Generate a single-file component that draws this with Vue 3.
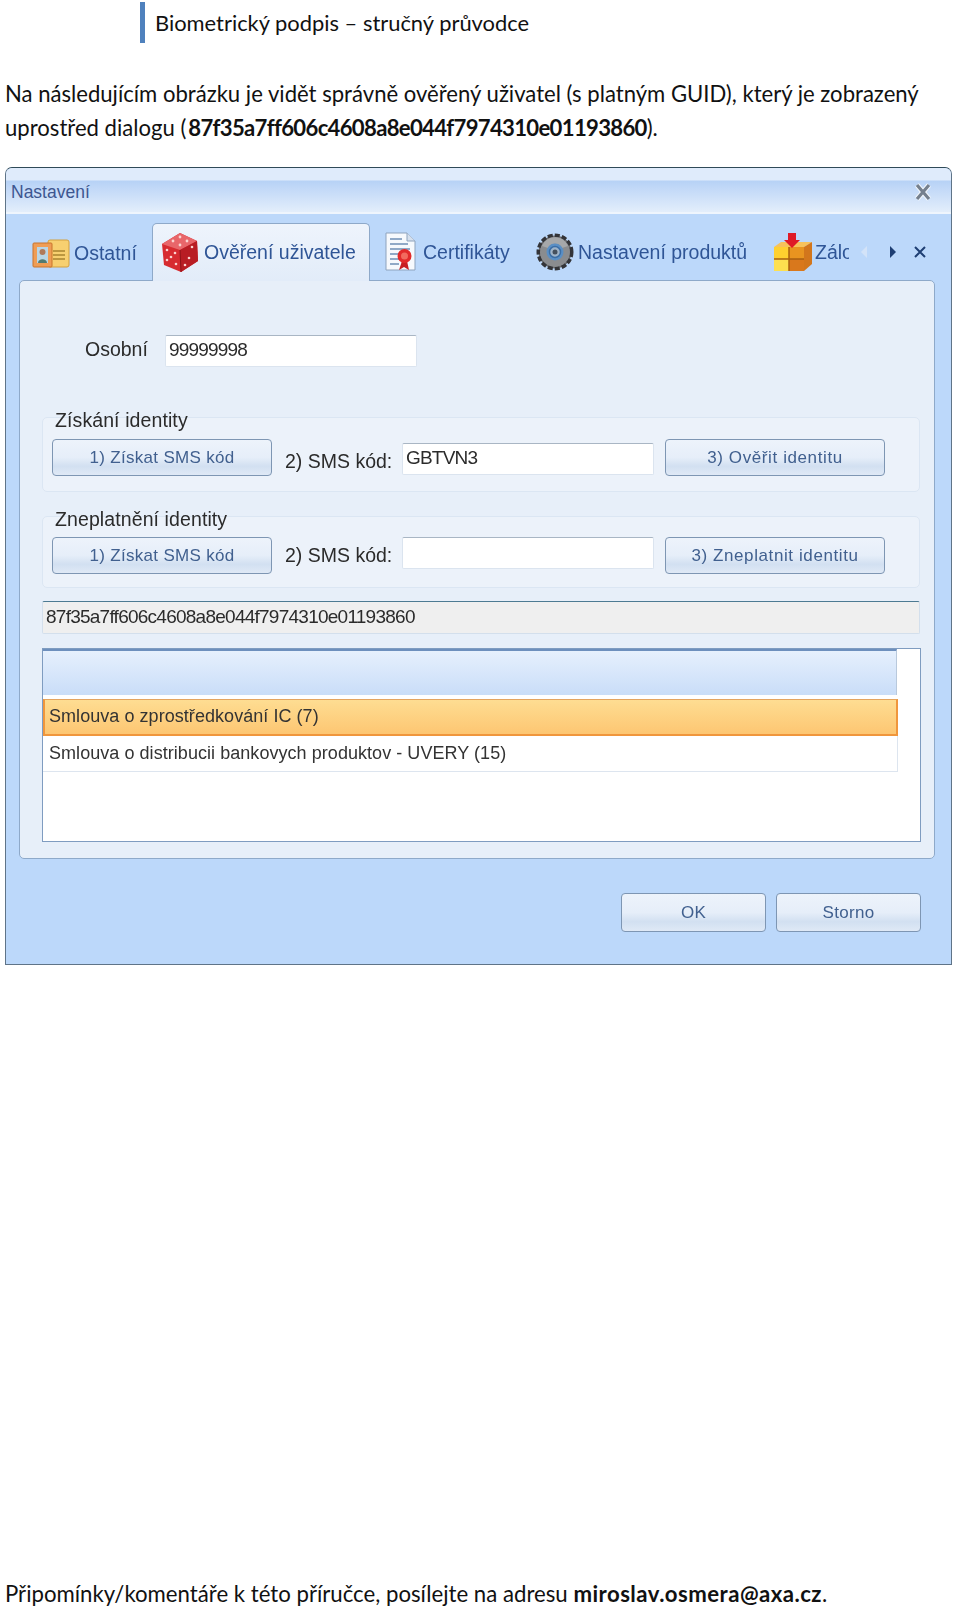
<script setup>
const rows = ['Smlouva o zprostředkování IC (7)', 'Smlouva o distribucii bankovych produktov - UVERY (15)']
</script>

<template>
  <div class="page">
    <header class="doc-head"><span class="doc-title">Biometrický podpis – stručný průvodce</span></header>
    <p class="intro">Na následujícím obrázku je vidět správně ověřený uživatel (s platným GUID), který je zobrazený<br>uprostřed dialogu (<b class="hash">87f35a7ff606c4608a8e044f7974310e01193860</b>).</p>

    <section class="dialog">
      <div class="titlebar">
        <span class="title-text">Nastavení</span>
        <svg class="title-x" width="18" height="18" viewBox="0 0 18 18"><path d="M3 2 L15 16 M15 2 L3 16" stroke="#f4f8fd" stroke-width="5" /><path d="M3 2 L15 16 M15 2 L3 16" stroke="#75808e" stroke-width="3.200" /></svg>
      </div>

      <div class="tabstrip">
        <div class="tab t1">
          <svg width="38" height="30" viewBox="0 0 38 30"><rect x="16" y="1" width="21" height="27" rx="2" fill="#f7d070" stroke="#d3a03e"/><path d="M21 12h12M21 16h12M21 20h12" stroke="#a9842f" stroke-width="1.500"/><rect x="1" y="4" width="19" height="24" rx="1" fill="#ef9d55" stroke="#c9752c"/><rect x="5" y="8" width="11" height="16" fill="#b9d6e6"/><circle cx="10.500" cy="13" r="3" fill="#b07a5a"/><path d="M6 24c0-5 9-5 9 0z" fill="#527a70"/></svg>
          <span>Ostatní</span>
        </div>
        <div class="tab t2 active">
          <svg width="38" height="41" viewBox="0 0 38 41"><path d="M19 1 L36 9 L37 29 L20 40 L3 33 L1 12Z" fill="#d72b30"/><path d="M19 1 L36 9 L19 18 L1 12Z" fill="#e8666a"/><path d="M19 18 L36 9 L37 29 L20 40Z" fill="#b81d24"/><path d="M19 18 L20 40" stroke="#8e1218"/><g fill="#fbd3d0"><circle cx="19" cy="5" r="1.400"/><circle cx="12" cy="9" r="1.400"/><circle cx="26" cy="9" r="1.400"/><circle cx="19" cy="13" r="1.400"/><circle cx="6" cy="18" r="1.300"/><circle cx="14" cy="21" r="1.300"/><circle cx="6" cy="28" r="1.300"/><circle cx="15" cy="32" r="1.300"/><circle cx="10" cy="25" r="1.300"/><circle cx="31" cy="15" r="1.300"/><circle cx="24" cy="33" r="1.300"/><circle cx="28" cy="26" r="1.300"/></g></svg>
          <span>Ověření uživatele</span>
        </div>
        <div class="tab t3">
          <svg width="32" height="40" viewBox="0 0 32 40"><path d="M1 1 H22 L30 9 V38 H1Z" fill="#f6f9fd" stroke="#8ea3bd"/><path d="M22 1 V9 H30" fill="#d5e0ee" stroke="#8ea3bd"/><path d="M5 7h12M5 12h18M5 17h20M5 22h9M5 27h9M5 32h9" stroke="#6f8fb5" stroke-width="1.500"/><path d="M17 29 L14 38 L19 35 L24 38 L22 29Z" fill="#c81e22"/><circle cx="19.500" cy="24" r="7" fill="#e22a2a"/><circle cx="19.500" cy="24" r="3.500" fill="#f26a5e"/></svg>
          <span>Certifikáty</span>
        </div>
        <div class="tab t4">
          <svg width="38" height="40" viewBox="0 0 38 40"><circle cx="19" cy="20" r="16.500" fill="#6c6d70" stroke="#333438" stroke-width="4" stroke-dasharray="5 2"/><circle cx="19" cy="20" r="15" fill="#8a8c8f"/><path d="M6 14a14 14 0 0 1 26 0l-6 2a8 8 0 0 0-14 0z" fill="#a6a8aa"/><circle cx="19" cy="20" r="8.500" fill="#5a8fc5"/><circle cx="19" cy="20" r="5.500" fill="#9fb4c9" stroke="#3b6ea6" stroke-width="1.500"/><circle cx="19" cy="20" r="2.500" fill="#44505e"/></svg>
          <span>Nastavení produktů</span>
        </div>
        <div class="tab t5">
          <svg width="39" height="39" viewBox="0 0 39 39"><path d="M1 14 L8 9 H39 L31 14Z" fill="#f7c25a"/><path d="M31 14 L39 9 V31 L31 38Z" fill="#d2761c"/><rect x="1" y="14" width="30" height="24" fill="#e89420"/><path d="M1 14 h15 v12 h-15z" fill="#ffd02f"/><path d="M1 26 h15 v12 h-15z" fill="#fde04f"/><path d="M16 26 h15 v12 h-15z" fill="#d9781c"/><path d="M16 14 V38 M1 26 H31" stroke="#a85f10" stroke-width="1.500"/><path d="M15 0 H23 V7 H27 L19 15 L11 7 H15Z" fill="#df1a26"/></svg>
          <span class="clip">Zálohy</span>
        </div>
        <div class="tab-nav">
          <svg width="10" height="14" viewBox="0 0 10 14"><path d="M8 1 L2 7 L8 13Z" fill="#d3e3f8"/></svg>
          <svg class="nav-next" width="10" height="14" viewBox="0 0 10 14"><path d="M2 1 L8 7 L2 13Z" fill="#1f3f73"/></svg>
          <svg class="nav-close" width="16" height="14" viewBox="0 0 16 14"><path d="M3 2 L13 12 M13 2 L3 12" stroke="#1f3f73" stroke-width="2"/></svg>
        </div>
      </div>

      <div class="panel">
        <div class="person">
          <label class="lbl person-lbl">Osobní</label>
          <div class="input person-in">99999998</div>
        </div>

        <fieldset class="group g1">
          <legend class="lg">Získání identity</legend>
          <button class="btn b-wide">1) Získat SMS kód</button>
          <span class="lbl sms s1">2) SMS kód:</span>
          <div class="input code i1">GBTVN3</div>
          <button class="btn b-last">3) Ověřit identitu</button>
        </fieldset>

        <fieldset class="group g2">
          <legend class="lg">Zneplatnění identity</legend>
          <button class="btn b-wide">1) Získat SMS kód</button>
          <span class="lbl sms s2">2) SMS kód:</span>
          <div class="input code"></div>
          <button class="btn b-last">3) Zneplatnit identitu</button>
        </fieldset>

        <div class="guid">87f35a7ff606c4608a8e044f7974310e01193860</div>

        <div class="list">
          <div class="list-head"></div>
          <div v-for="(r, i) in rows" :key="r" class="row" :class="{ sel: i === 0 }">{{ r }}</div>
        </div>
      </div>

      <div class="dlg-foot">
        <button class="btn foot-btn">OK</button>
        <button class="btn foot-btn">Storno</button>
      </div>
    </section>

    <footer class="doc-foot">Připomínky/komentáře k této příručce, posílejte na adresu <b class="mail">miroslav.osmera@axa.cz</b>.</footer>
  </div>
</template>

<style scoped>
* { box-sizing: border-box; }
.page { width: 960px; height: 1608px; display: flex; flex-direction: column; background: #fff; font-family: Lato, "Open Sans", sans-serif; color: #111; overflow: hidden; }
.doc-head { margin: 2px 0 0 140px; height: 41px; border-left: 5px solid #4f81bd; padding-left: 10px; line-height: 41px; font-size: 21.900px; }
.intro { margin: 34px 0 0; padding-left: 5px; font-size: 22.100px; line-height: 34px; height: 68px; }
.hash { font-weight: 700; letter-spacing: -.68px; margin-left: 2px; }
.mail { font-weight: 700; letter-spacing: .45px; }
.dialog { margin: 22px 0 0 5px; width: 947px; height: 798px; border: 1px solid #5f7488; border-top-color: #2f4a58; border-radius: 7px 7px 0 0; background: #bcd8fa; display: flex; flex-direction: column; filter: blur(.35px); }
.titlebar { height: 46px; flex: none; background: linear-gradient(#dfebfb 0, #dfebfb 12px, #b7d2f6 13px, #c4daf8 50%, #e3eefb 100%); border-bottom: 2px solid #eef5fd; border-radius: 6px 6px 0 0; display: flex; align-items: center; justify-content: space-between; padding: 4px 19px 0 5px; }
.title-text { font: 17.500px "Liberation Sans", sans-serif; color: #3d5690; }
.tabstrip { height: 66px; flex: none; padding: 9px 0 0 18px; display: flex; align-items: flex-start; position: relative; z-index: 1; }
.tab { height: 58px; display: flex; align-items: center; gap: 5px; font: 19.500px "Liberation Sans", sans-serif; color: #2f5596; white-space: nowrap; flex: none; }
.t1 { width: 128px; padding: 3px 0 0 8px; gap: 4px; }
.t2 { width: 218px; padding: 0 0 0 8px; }
.t3 { width: 160px; padding: 0 0 0 15px; gap: 6px; }
.t4 { width: 237px; padding: 0 0 0 6px; gap: 4px; }
.t5 { width: 82px; padding: 0 0 0 6px; gap: 3px; overflow: hidden; }
.active { background: linear-gradient(#eef4fc, #e2ecf9); border: 1px solid #8ea9c9; border-bottom: 0; border-radius: 5px 5px 0 0; }
.clip { display: block; width: 34px; overflow: hidden; }
.tab-nav { display: flex; align-items: center; margin: 22px 0 0 10px; }
.nav-next { margin-left: 19px; }
.nav-close { margin-left: 14px; }
.panel { margin: 0 16px 0 13px; height: 579px; flex: none; background: #e7eff9; border: 1px solid #8ea9c9; border-radius: 5px; padding: 54px 14px 0 22px; }
.person { display: flex; align-items: center; height: 32px; }
.lbl { font: 19.500px "Liberation Sans", sans-serif; color: #2b2b2b; }
.person-lbl { margin: 0 0 4px 43px; width: 80px; }
.input { background: #fff; border: 1px solid #dbe4ef; border-top-color: #a9b6c4; border-radius: 2px; height: 32px; font: 19px "Liberation Sans", sans-serif; color: #2b2b2b; padding: 0 0 0 3px; line-height: 28px; letter-spacing: -.8px; }
.person-in { width: 252px; }
.group { position: relative; margin: 0; padding: 21px 0 0 9px; border: 1px solid #dbe6f3; border-radius: 5px; background: #ecf2fa; display: flex; align-items: flex-start; min-width: 0; }
.g1 { margin-top: 50px; height: 75px; }
.g2 { margin-top: 24px; height: 72px; padding-top: 20px; }
.lg { position: absolute; left: 11px; top: -9px; padding: 0 1px; font: 19.500px "Liberation Sans", sans-serif; color: #2b2b2b; line-height: 22px; letter-spacing: .1px; }
.btn { height: 37px; border: 1px solid #7e96b3; border-radius: 4px; background: linear-gradient(#edf3fb 0, #e6eef9 50%, #d2e0f1 75%, #dfe9f6 100%); font: 17px "Liberation Sans", sans-serif; color: #41608f; padding: 0; letter-spacing: .3px; }
.b-wide { width: 220px; }
.b-last { width: 220px; margin-left: 11px; letter-spacing: .6px; }
.sms { margin-left: 13px; width: 117px; line-height: 22px; }
.s1 { margin-top: 11px; }
.s2 { margin-top: 7px; }
.code { width: 252px; }
.i1 { margin-top: 4px; }
.guid { margin-top: 13px; height: 33px; background: #efefef; border: 1px solid #d3dfec; border-top: 1px solid #4d7a92; border-radius: 2px; font: 19px "Liberation Sans", sans-serif; color: #2b2b2b; padding-left: 3px; line-height: 30px; letter-spacing: -.75px; }
.list { margin-top: 14px; height: 194px; width: 879px; background: #fff; border: 1px solid #7f9cc0; }
.list-head { width: 854px; height: 46px; background: linear-gradient(#e6f0fd, #c9ddf8); border-top: 2px solid #6d8fbd; border-right: 1px solid #b9c9dc; }
.row { width: 855px; height: 36px; font: 18px "Liberation Sans", sans-serif; color: #333; line-height: 34px; padding-left: 6px; letter-spacing: .05px; border-right: 1px solid #dde5ef; border-bottom: 1px solid #dde5ef; }
.sel { height: 37px; margin-top: 4px; background: linear-gradient(#fedd92, #fdc672); border: 2px solid #f0963c; border-top-width: 1px; border-top-color: #e4a45e; padding-left: 4px; line-height: 32px; }
.dlg-foot { flex: 1; display: flex; justify-content: flex-end; align-items: flex-start; gap: 10px; padding: 34px 30px 0 0; }
.foot-btn { width: 145px; height: 39px; }
.doc-foot { margin-top: auto; padding: 0 0 0 5px; height: 28px; line-height: 28px; font-size: 22.200px; }
</style>
